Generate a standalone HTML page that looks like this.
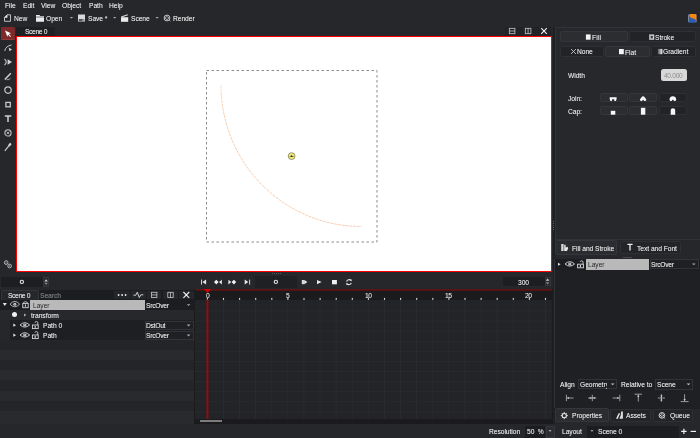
<!DOCTYPE html>
<html><head><meta charset="utf-8">
<style>
*{margin:0;padding:0;box-sizing:border-box}
html,body{width:700px;height:438px;overflow:hidden;background:#26272b;font-family:"Liberation Sans",sans-serif;font-size:6.6px;color:#ececec}
body{position:relative}
.a{position:absolute}
.t{position:absolute;white-space:nowrap;line-height:1;will-change:transform;margin-top:0.6px;text-shadow:0.25px 0 0 rgba(236,236,236,0.35)}
svg{position:absolute;overflow:visible}
.btn{position:absolute;background:#2c2d31;border:0.6px solid #35363b;border-radius:1.5px}
.btnd{position:absolute;background:#222327;border:0.6px solid #2f3035;border-radius:1.5px}
.cb{position:absolute;background:#1f2023;border:0.6px solid #333439}
</style></head><body>

<!-- ============ MENU ============ -->
<div class="t" style="left:5px;top:2.6px">File</div>
<div class="t" style="left:22.5px;top:2.6px">Edit</div>
<div class="t" style="left:41px;top:2.6px">View</div>
<div class="t" style="left:62px;top:2.6px">Object</div>
<div class="t" style="left:89px;top:2.6px">Path</div>
<div class="t" style="left:109px;top:2.6px">Help</div>

<!-- ============ TOOLBAR ============ -->
<svg style="left:0;top:0" width="700" height="26">
 <!-- new doc -->
 <path d="M7 14.8 H10.5 V21.3 H4.5 V17.3 Z" fill="none" stroke="#cfcfcf" stroke-width="0.9"/>
 <path d="M7.4 14.4 L4.1 17.7 H7.4 Z" fill="#ececec"/>
 <!-- folder -->
 <path d="M36 15 H39.5 L40.3 16 H44 V21.8 H36 Z" fill="#ececec"/>
 <path d="M36 17 H44" stroke="#26272b" stroke-width="0.6"/>
 <path d="M69.8 17 H73.2 L71.5 18.6 Z" fill="#b0b0b0"/>
 <!-- save -->
 <rect x="78" y="14.5" width="7" height="7" fill="#d8d8d8"/>
 <rect x="78.8" y="19" width="5.4" height="2" fill="#55565a"/>
 <rect x="82.5" y="19.6" width="1.3" height="1.2" fill="#e0e0e0"/>
 <path d="M113 17 H116.4 L114.7 18.6 Z" fill="#b0b0b0"/>
 <!-- scene clapper -->
 <path d="M121 17.2 H128.2 V21.8 H121 Z" fill="#ececec"/>
 <path d="M121 16.6 L127.6 14.2 L128 15.2 L121.4 17.4 Z" fill="#dcdcdc"/>
 <path d="M155.4 17 H158.8 L157.1 18.6 Z" fill="#b0b0b0"/>
 <!-- render -->
 <circle cx="167" cy="18" r="2.9" fill="none" stroke="#d8d8d8" stroke-width="0.9"/>
 <circle cx="167" cy="16.6" r="0.7" fill="#d8d8d8"/><circle cx="167" cy="19.4" r="0.7" fill="#d8d8d8"/>
 <circle cx="165.6" cy="18" r="0.7" fill="#d8d8d8"/><circle cx="168.4" cy="18" r="0.7" fill="#d8d8d8"/>
 <path d="M169.2 20.2 L170.4 21.2" stroke="#d8d8d8" stroke-width="0.7"/>
 <!-- logo -->
 <rect x="688" y="14" width="8.5" height="8.8" rx="1" fill="#2c5fb0"/>
 <path d="M689.6 14 H695.3 Q696.5 14 696.5 15.2 V20.8 Q695.6 19 692.5 18.2 Q690 17.6 689.6 16.4 Z" fill="#f7870f"/>
 <path d="M688.5 15 V21.5" stroke="#8c929a" stroke-width="0.8"/>
 <path d="M696.2 20.5 V22" stroke="#a0a6ae" stroke-width="0.6"/>
</svg>
<div class="t" style="left:14px;top:15.6px">New</div>
<div class="t" style="left:46px;top:15.6px">Open</div>
<div class="t" style="left:88px;top:15.6px">Save *</div>
<div class="t" style="left:131px;top:15.6px">Scene</div>
<div class="t" style="left:173px;top:15.6px">Render</div>

<!-- ============ CANVAS TAB BAR ============ -->
<div class="a" style="left:16px;top:26.5px;width:38.5px;height:9px;background:#1f2023"></div>
<div class="t" style="left:24.5px;top:28.6px;letter-spacing:-0.3px">Scene 0</div>
<div class="a" style="left:505px;top:26.5px;width:45.5px;height:9px;background:#222327"></div>
<svg style="left:0;top:0" width="700" height="40">
 <rect x="509.3" y="28.3" width="5.6" height="5.4" fill="none" stroke="#c8c8c8" stroke-width="0.8"/>
 <path d="M509.3 31 H514.9" stroke="#c8c8c8" stroke-width="0.8"/>
 <rect x="525.3" y="28.3" width="5.6" height="5.4" fill="none" stroke="#c8c8c8" stroke-width="0.8"/>
 <path d="M528.1 28.3 V33.7" stroke="#c8c8c8" stroke-width="0.8"/>
 <path d="M541.2 28.2 L546.8 33.8 M546.8 28.2 L541.2 33.8" stroke="#f0f0f0" stroke-width="1.15"/>
</svg>

<!-- ============ CANVAS ============ -->
<div class="a" style="left:16px;top:36px;width:536.4px;height:236px;background:#ff0000"></div>
<div class="a" style="left:17.1px;top:37.1px;width:534.2px;height:233.8px;background:#ffffff"></div>
<svg style="left:0;top:0" width="700" height="300">
 <rect x="206.5" y="70.5" width="170.5" height="171.5" fill="none" stroke="#8c8c8c" stroke-width="1" stroke-dasharray="2.6 2.4"/>
 <defs><linearGradient id="arcg" x1="0" y1="85" x2="0" y2="227" gradientUnits="userSpaceOnUse"><stop offset="0" stop-color="#f9dcc8"/><stop offset="0.2" stop-color="#f5c8a8"/><stop offset="1" stop-color="#f6c9aa"/></linearGradient></defs>
 <path d="M221 85 A140.5 141.5 0 0 0 361.5 226.5" fill="none" stroke="url(#arcg)" stroke-width="0.95" stroke-dasharray="3 0.8"/>
 <circle cx="291.6" cy="156.1" r="3.4" fill="#f2ee78" stroke="#4a4a3a" stroke-width="0.55"/>
 <path d="M289.6 156.4 H293.6" stroke="#303020" stroke-width="0.7"/><path d="M291.6 154.6 L292.3 156.4 L291.6 157.3 L290.9 156.4 Z" fill="#303020"/>
</svg>

<!-- ============ LEFT TOOLS ============ -->
<div class="a" style="left:1px;top:27px;width:14.2px;height:13.2px;background:#7e2a2b;border-radius:1.5px;border-bottom:0.7px solid #8f3b3b"></div>
<svg style="left:0;top:0" width="16" height="280">
 <path d="M5 30.4 L11 33.2 L8.9 34 L11 36.3 L10.2 37 L8.1 34.8 L7.3 36.8 Z" fill="#ffffff"/>
 <!-- node tool -->
 <path d="M4.8 51 Q5.5 46 11.5 45" fill="none" stroke="#c4c4c4" stroke-width="1"/>
 <path d="M8.6 47.4 L12 49.6 L9.6 51.2 Z" fill="#d4d4d4"/>
 <!-- path tool -->
 <path d="M4.5 59 Q8 62 4.5 65.2" fill="none" stroke="#c4c4c4" stroke-width="1.1"/>
 <path d="M7.6 59.2 L12 62 L7.6 64.8 Z" fill="#d4d4d4"/>
 <!-- pen -->
 <path d="M4.8 79.5 L10.8 73.2" stroke="#d0d0d0" stroke-width="1.5"/>
 <path d="M6.5 79.6 Q9.5 80.2 10.5 78.3" fill="none" stroke="#b8b8b8" stroke-width="0.8"/>
 <!-- circle -->
 <circle cx="8" cy="90.1" r="3.2" fill="none" stroke="#c8c8c8" stroke-width="1.2"/>
 <!-- rect -->
 <rect x="5.9" y="102.4" width="4.4" height="4.4" fill="none" stroke="#c8c8c8" stroke-width="1.3"/>
 <!-- T -->
 <path d="M4.8 116 H11.3 M8 116 V122" stroke="#d0d0d0" stroke-width="1.5"/>
 <!-- circle x -->
 <circle cx="8" cy="132.9" r="3.1" fill="none" stroke="#c4c4c4" stroke-width="1.1"/>
 <path d="M6.6 131.5 L9.4 134.3 M9.4 131.5 L6.6 134.3" stroke="#c4c4c4" stroke-width="0.9"/>
 <!-- eyedropper -->
 <path d="M4.8 150.8 L10.8 143.5" stroke="#c4c4c4" stroke-width="1.2"/>
 <path d="M8.8 145.8 L10.8 143.5" stroke="#d4d4d4" stroke-width="2"/>
 <!-- link icon -->
 <ellipse cx="6.2" cy="262.6" rx="1.8" ry="1.9" fill="none" stroke="#d8d8d8" stroke-width="0.8"/>
 <ellipse cx="9.6" cy="266" rx="1.8" ry="1.9" fill="none" stroke="#d8d8d8" stroke-width="0.8"/>
 <path d="M6.2 261.6 V263.6 M9.6 265 V267" stroke="#bbbbbb" stroke-width="0.6"/>
</svg>

<!-- ============ TRANSPORT ============ -->
<div class="a" style="left:1px;top:276.5px;width:42.2px;height:10.3px;background:#1d1e21;border-radius:1px"></div>
<div class="a" style="left:43.2px;top:276.5px;width:5.8px;height:10.3px;background:#26272b;border:0.6px solid #35363a"></div>

<div class="a" style="left:254.5px;top:276px;width:42.5px;height:11.6px;background:#1f2023"></div>

<div class="a" style="left:502.5px;top:276.6px;width:42.2px;height:9.8px;background:#1d1e21;border-radius:1px"></div>
<div class="a" style="left:544.7px;top:276.6px;width:5.9px;height:9.8px;background:#26272b;border:0.6px solid #35363a"></div>
<div class="t" style="left:518px;top:279px">300</div>
<div class="a" style="left:272px;top:273px;width:9px;height:1px;background:repeating-linear-gradient(90deg,#58595e 0 1px,transparent 1px 2px)"></div>
<svg style="left:0;top:0" width="700" height="300">
 <ellipse cx="21.85" cy="281.9" rx="1.65" ry="1.6" fill="none" stroke="#e6e6e6" stroke-width="1.1"/>
 <ellipse cx="275.85" cy="281.9" rx="1.65" ry="1.6" fill="none" stroke="#e6e6e6" stroke-width="1.1"/>
 <path d="M44.3 281.4 L46.1 279.2 L47.9 281.4 Z" fill="#d0d0d0"/><path d="M44.3 282.8 L46.1 285 L47.9 282.8 Z" fill="#8a8a8a"/>
 <path d="M545.8 280.8 L547.6 278.6 L549.4 280.8 Z" fill="#d0d0d0"/><path d="M545.8 282.2 L547.6 284.4 L549.4 282.2 Z" fill="#8a8a8a"/>
 <!-- |< -->
 <rect x="201" y="279.6" width="0.9" height="5" fill="#e6e6e6"/>
 <path d="M206.1 279.6 V284.6 L202.4 282.1 Z" fill="#e6e6e6"/>
 <!-- <> < -->
 <path d="M214 282.1 L216.3 279.7 L218.6 282.1 L216.3 284.5 Z" fill="#f0f0f0"/>
 <path d="M221.9 279.7 V284.5 L219 282.1 Z" fill="#e6e6e6"/>
 <!-- > <> -->
 <path d="M228.4 279.7 V284.5 L231.3 282.1 Z" fill="#e6e6e6"/>
 <path d="M231.6 282.1 L233.9 279.7 L236.2 282.1 L233.9 284.5 Z" fill="#f0f0f0"/>
 <!-- >| -->
 <path d="M244.7 279.6 V284.6 L248.3 282.1 Z" fill="#e6e6e6"/>
 <rect x="249.2" y="279.6" width="0.9" height="5" fill="#e6e6e6"/>
 <!-- play from -->
 <rect x="301.8" y="280" width="2.6" height="4.2" fill="#d8d8d8"/>
 <path d="M304.2 280 V284.2 L307.4 282.1 Z" fill="#e8e8e8"/>
 <!-- play -->
 <path d="M317 280 V284.3 L321.6 282.1 Z" fill="#e8e8e8"/>
 <!-- stop -->
 <rect x="332" y="280" width="4.9" height="4.3" fill="#f0f0f0"/>
 <!-- loop -->
 <path d="M346.6 281.6 A2.5 2.5 0 0 1 351 280.6" fill="none" stroke="#e0e0e0" stroke-width="1.1"/>
 <path d="M351.3 282.8 A2.5 2.5 0 0 1 346.9 283.6" fill="none" stroke="#e0e0e0" stroke-width="1.1"/>
 <path d="M350 279.3 L352 279.8 L351.2 281.6 Z M348 285 L346 284.4 L346.8 282.6 Z" fill="#e0e0e0"/>
</svg>

<!-- ============ LAYER PANEL ============ -->
<div class="a" style="left:0;top:290px;width:194px;height:134px;background:#26272b"></div>
<div class="a" style="left:0;top:290px;width:194px;height:10px;background:#1c1d20"></div>
<div class="a" style="left:1px;top:290px;width:37.5px;height:10px;background:#26272b;border:0.6px solid #34353a;border-bottom:none;border-radius:1.5px 1.5px 0 0"></div>
<div class="t" style="left:8px;top:292.2px;letter-spacing:-0.3px">Scene 0</div>
<div class="t" style="left:40px;top:292.2px;color:#6f7075">Search</div>
<div class="a" style="left:114.3px;top:290.7px;width:15.7px;height:8.6px;background:#25262a;border-radius:1px"></div>
<div class="a" style="left:131px;top:290.7px;width:14.7px;height:8.6px;background:#25262a;border-radius:1px"></div>
<div class="a" style="left:147px;top:290.7px;width:14.4px;height:8.6px;background:#25262a;border-radius:1px"></div>
<div class="a" style="left:163px;top:290.7px;width:14.9px;height:8.6px;background:#25262a;border-radius:1px"></div>
<div class="a" style="left:179px;top:290.7px;width:14.6px;height:8.6px;background:#25262a;border-radius:1px"></div>
<svg style="left:0;top:0" width="200" height="438">
 <circle cx="118.6" cy="295" r="0.9" fill="#eee"/><circle cx="122.1" cy="295" r="0.9" fill="#eee"/><circle cx="125.6" cy="295" r="0.9" fill="#eee"/>
 <path d="M133.5 295.2 H135.8 L137.3 292.2 L139.3 297.6 L140.8 294.8 H143.3" fill="none" stroke="#e0e0e0" stroke-width="0.9"/>
 <rect x="151.5" y="292.3" width="5.4" height="5.2" fill="none" stroke="#c8c8c8" stroke-width="0.8"/>
 <path d="M151.5 294.9 H156.9" stroke="#c8c8c8" stroke-width="0.8"/>
 <rect x="167.8" y="292.3" width="5.4" height="5.2" fill="none" stroke="#c8c8c8" stroke-width="0.8"/>
 <path d="M170.5 292.3 V297.5" stroke="#c8c8c8" stroke-width="0.8"/>
 <path d="M183.4 292 L189.2 297.8 M189.2 292 L183.4 297.8" stroke="#f0f0f0" stroke-width="1.1"/>
</svg>

<!-- rows -->
<div class="a" style="left:0;top:300px;width:194px;height:10px;background:#1c1d20"></div>
<div class="a" style="left:0;top:310px;width:194px;height:10px;background:#27282c"></div>
<div class="a" style="left:0;top:320px;width:10px;height:20px;background:#26272b"></div>
<div class="a" style="left:10px;top:320px;width:184px;height:20px;background:#1e1f22"></div>
<div class="a" style="left:0;top:339.6px;width:194px;height:10.2px;background:#242529"></div>
<div class="a" style="left:0;top:349.8px;width:194px;height:10.2px;background:#292a2e"></div>
<div class="a" style="left:0;top:360px;width:194px;height:10.2px;background:#242529"></div>
<div class="a" style="left:0;top:370.2px;width:194px;height:10.2px;background:#292a2e"></div>
<div class="a" style="left:0;top:380.4px;width:194px;height:10.2px;background:#242529"></div>
<div class="a" style="left:0;top:390.6px;width:194px;height:10.2px;background:#292a2e"></div>
<div class="a" style="left:0;top:400.8px;width:194px;height:10.2px;background:#242529"></div>
<div class="a" style="left:0;top:411px;width:194px;height:13.0px;background:#292a2e"></div>

<div class="a" style="left:30px;top:300.4px;width:114.6px;height:9.6px;background:#b9b9b9"></div>
<div class="t" style="left:32.5px;top:302.3px;color:#1e1e1e">Layer</div>
<div class="a" style="left:145.4px;top:300.5px;width:48.2px;height:9.5px;background:#1c1d20"></div>
<div class="t" style="left:146.4px;top:302.4px;letter-spacing:-0.22px">SrcOver</div>
<div class="t" style="left:31px;top:312.3px">transform</div>
<div class="t" style="left:43px;top:322.3px">Path 0</div>
<div class="cb" style="left:145.4px;top:321.2px;width:48.2px;height:8.6px"></div>
<div class="t" style="left:146.4px;top:322.6px;letter-spacing:-0.22px">DstOut</div>
<div class="t" style="left:43px;top:332.3px">Path</div>
<div class="cb" style="left:145.4px;top:331px;width:48.2px;height:8.6px"></div>
<div class="t" style="left:146.4px;top:332.6px;letter-spacing:-0.22px">SrcOver</div>
<svg style="left:0;top:0" width="200" height="438">
 <path d="M2.8 302.9 H6.8 L4.8 306.1 Z" fill="#e6e6e6"/>
 <path d="M10.0 304.2 Q14.8 298.59999999999997 19.6 304.2 Q14.8 309.4 10.0 304.2 Z" fill="none" stroke="#d4d4d4" stroke-width="0.8"/><circle cx="14.8" cy="304.2" r="1.5" fill="#cfcfcf"/><circle cx="14.8" cy="304.2" r="0.5" fill="#555"/>
 <rect x="22.8" y="303.4" width="5.4" height="4.3" fill="none" stroke="#d8d8d8" stroke-width="0.9"/><rect x="24.900000000000002" y="304.5" width="1.1" height="2.1" fill="#d8d8d8"/><path d="M23.7 303.4 V302.29999999999995 Q25.5 301.0 27.3 302.29999999999995 V303.4" fill="none" stroke="#d8d8d8" stroke-width="0.8"/>
 <path d="M186.8 304.2 H190.4 L188.6 306 Z" fill="#a8a8a8"/>
 <!-- transform -->
 <circle cx="14.5" cy="314.6" r="2.5" fill="#f4f4f4"/>
 <path d="M24.3 313.6 L26 315 L24.3 316.4 Z" fill="#e0e0e0"/>
 <!-- path 0 -->
 <path d="M13.3 323.6 L16 325.2 L13.3 326.8 Z" fill="#e6e6e6"/>
 <path d="M20.0 325.0 Q24.8 320.4 29.6 325.0 Q24.8 329.2 20.0 325.0 Z" fill="none" stroke="#dadada" stroke-width="0.9"/><ellipse cx="24.8" cy="325.0" rx="1.7" ry="1.5" fill="#c4c4c4"/><circle cx="24.8" cy="324.8" r="0.5" fill="#666"/>
 <rect x="32.4" y="325.0" width="5.8" height="3.6" fill="none" stroke="#dadada" stroke-width="0.9"/><rect x="34.6" y="325.9" width="1.2" height="1.9" fill="#dadada"/><path d="M37.8 325.0 V322.8 Q37.8 321.6 36.4 321.6 Q35.0 321.6 35.0 322.6" fill="none" stroke="#dadada" stroke-width="0.85"/>
 <path d="M186.8 324.6 H190.4 L188.6 326.4 Z" fill="#a8a8a8"/>
 <!-- path -->
 <path d="M13.3 333.6 L16 335.2 L13.3 336.8 Z" fill="#e6e6e6"/>
 <path d="M20.0 335.0 Q24.8 330.4 29.6 335.0 Q24.8 339.2 20.0 335.0 Z" fill="none" stroke="#dadada" stroke-width="0.9"/><ellipse cx="24.8" cy="335.0" rx="1.7" ry="1.5" fill="#c4c4c4"/><circle cx="24.8" cy="334.8" r="0.5" fill="#666"/>
 <rect x="32.4" y="335.0" width="5.8" height="3.6" fill="none" stroke="#dadada" stroke-width="0.9"/><rect x="34.6" y="335.9" width="1.2" height="1.9" fill="#dadada"/><path d="M37.8 335.0 V332.8 Q37.8 331.6 36.4 331.6 Q35.0 331.6 35.0 332.6" fill="none" stroke="#dadada" stroke-width="0.85"/>
 <path d="M186.8 334.6 H190.4 L188.6 336.4 Z" fill="#a8a8a8"/>
</svg>

<!-- ============ TIMELINE ============ -->
<div class="a" style="left:194px;top:289px;width:358.5px;height:135px;background:#1b1b1d"></div>
<div class="a" style="left:194.6px;top:300px;width:357.9px;height:119px;background:#232427"></div>
<div class="a" style="left:194.6px;top:289px;width:357.9px;height:2.4px;background:linear-gradient(180deg,#651515,#481111)"></div>
<svg style="left:0;top:0" width="560" height="438">
<rect x="206.90" y="300" width="0.8" height="119" fill="#2b2c30"/>
<rect x="206.85" y="297.9" width="1.1" height="2" fill="#d8d8d8"/>
<rect x="223.00" y="300" width="0.8" height="119" fill="#2b2c30"/>
<rect x="222.95" y="297.9" width="1.1" height="2" fill="#d8d8d8"/>
<rect x="239.10" y="300" width="0.8" height="119" fill="#2b2c30"/>
<rect x="239.05" y="297.9" width="1.1" height="2" fill="#d8d8d8"/>
<rect x="255.20" y="300" width="0.8" height="119" fill="#2b2c30"/>
<rect x="255.15" y="297.9" width="1.1" height="2" fill="#d8d8d8"/>
<rect x="271.30" y="300" width="0.8" height="119" fill="#2b2c30"/>
<rect x="271.25" y="297.9" width="1.1" height="2" fill="#d8d8d8"/>
<rect x="287.40" y="300" width="0.8" height="119" fill="#2b2c30"/>
<rect x="287.35" y="297.9" width="1.1" height="2" fill="#d8d8d8"/>
<rect x="303.50" y="300" width="0.8" height="119" fill="#2b2c30"/>
<rect x="303.45" y="297.9" width="1.1" height="2" fill="#d8d8d8"/>
<rect x="319.60" y="300" width="0.8" height="119" fill="#2b2c30"/>
<rect x="319.55" y="297.9" width="1.1" height="2" fill="#d8d8d8"/>
<rect x="335.70" y="300" width="0.8" height="119" fill="#2b2c30"/>
<rect x="335.65" y="297.9" width="1.1" height="2" fill="#d8d8d8"/>
<rect x="351.80" y="300" width="0.8" height="119" fill="#2b2c30"/>
<rect x="351.75" y="297.9" width="1.1" height="2" fill="#d8d8d8"/>
<rect x="367.90" y="300" width="0.8" height="119" fill="#2b2c30"/>
<rect x="367.85" y="297.9" width="1.1" height="2" fill="#d8d8d8"/>
<rect x="384.00" y="300" width="0.8" height="119" fill="#2b2c30"/>
<rect x="383.95" y="297.9" width="1.1" height="2" fill="#d8d8d8"/>
<rect x="400.10" y="300" width="0.8" height="119" fill="#2b2c30"/>
<rect x="400.05" y="297.9" width="1.1" height="2" fill="#d8d8d8"/>
<rect x="416.20" y="300" width="0.8" height="119" fill="#2b2c30"/>
<rect x="416.15" y="297.9" width="1.1" height="2" fill="#d8d8d8"/>
<rect x="432.30" y="300" width="0.8" height="119" fill="#2b2c30"/>
<rect x="432.25" y="297.9" width="1.1" height="2" fill="#d8d8d8"/>
<rect x="448.40" y="300" width="0.8" height="119" fill="#2b2c30"/>
<rect x="448.35" y="297.9" width="1.1" height="2" fill="#d8d8d8"/>
<rect x="464.50" y="300" width="0.8" height="119" fill="#2b2c30"/>
<rect x="464.45" y="297.9" width="1.1" height="2" fill="#d8d8d8"/>
<rect x="480.60" y="300" width="0.8" height="119" fill="#2b2c30"/>
<rect x="480.55" y="297.9" width="1.1" height="2" fill="#d8d8d8"/>
<rect x="496.70" y="300" width="0.8" height="119" fill="#2b2c30"/>
<rect x="496.65" y="297.9" width="1.1" height="2" fill="#d8d8d8"/>
<rect x="512.80" y="300" width="0.8" height="119" fill="#2b2c30"/>
<rect x="512.75" y="297.9" width="1.1" height="2" fill="#d8d8d8"/>
<rect x="528.90" y="300" width="0.8" height="119" fill="#2b2c30"/>
<rect x="528.85" y="297.9" width="1.1" height="2" fill="#d8d8d8"/>
<rect x="545.00" y="300" width="0.8" height="119" fill="#2b2c30"/>
<rect x="544.95" y="297.9" width="1.1" height="2" fill="#d8d8d8"/>
<rect x="194.6" y="310.5" width="358" height="0.8" fill="#2a2b2f"/>
<rect x="194.6" y="320.6" width="358" height="0.8" fill="#2a2b2f"/>
<rect x="194.6" y="330.7" width="358" height="0.8" fill="#2a2b2f"/>
<rect x="194.6" y="340.8" width="358" height="0.8" fill="#2a2b2f"/>
<rect x="194.6" y="350.9" width="358" height="0.8" fill="#2a2b2f"/>
<rect x="194.6" y="361.0" width="358" height="0.8" fill="#2a2b2f"/>
<rect x="194.6" y="371.1" width="358" height="0.8" fill="#2a2b2f"/>
<rect x="194.6" y="381.2" width="358" height="0.8" fill="#2a2b2f"/>
<rect x="194.6" y="391.3" width="358" height="0.8" fill="#2a2b2f"/>
<rect x="194.6" y="401.4" width="358" height="0.8" fill="#2a2b2f"/>
<rect x="194.6" y="411.5" width="358" height="0.8" fill="#2a2b2f"/>
<path d="M203.8 289 H211 L207.4 292.9 Z" fill="#d40000"/>
<rect x="206.6" y="299.5" width="1.7" height="119.3" fill="#b80000"/>
</svg>
<div class="t" style="left:205.6px;top:292.2px;color:#e4e4e4">0</div>
<div class="t" style="left:285.8px;top:292.2px;color:#e4e4e4">5</div>
<div class="t" style="left:364.6px;top:292.2px;color:#e4e4e4;letter-spacing:-0.3px">10</div>
<div class="t" style="left:444.8px;top:292.2px;color:#e4e4e4;letter-spacing:-0.3px">15</div>
<div class="t" style="left:525.2px;top:292.2px;color:#e4e4e4;letter-spacing:-0.3px">20</div>
<div class="a" style="left:199.7px;top:420px;width:22.3px;height:2px;background:#7c7c7c"></div>

<!-- ============ RIGHT PANEL ============ -->
<div class="a" style="left:552.5px;top:26.5px;width:2.2px;height:397.5px;background:#1f2023"></div>
<div class="a" style="left:553.3px;top:221px;width:0.7px;height:9px;background:repeating-linear-gradient(180deg,#5a5b60 0 1px,transparent 1px 2px)"></div>
<div class="a" style="left:554.7px;top:26.5px;width:146px;height:213.8px;background:#27282c;border:0.8px solid #323338;border-right:none"></div>

<div class="btn" style="left:560px;top:31px;width:67.5px;height:11.4px"></div>
<div class="btnd" style="left:629px;top:31.3px;width:67px;height:11px"></div>
<div class="btnd" style="left:560px;top:46.2px;width:44px;height:10.6px"></div>
<div class="btn" style="left:605px;top:46.2px;width:45.3px;height:10.6px"></div>
<div class="btnd" style="left:651.4px;top:46.2px;width:44.6px;height:10.6px"></div>
<svg style="left:0;top:0" width="700" height="130">
 <rect x="585.9" y="34.4" width="4.7" height="5.3" fill="#f4f4f4"/>
 <rect x="649.2" y="34.4" width="5" height="5.4" fill="#d0d0d0"/>
 <rect x="650.6" y="35.8" width="2.2" height="2.6" fill="#3a3b40"/>
 <path d="M571 49 L576 54 M576 49 L571 54" stroke="#d8d8d8" stroke-width="0.8"/>
 <rect x="619" y="49" width="4.8" height="5.2" fill="#f4f4f4"/>
 <defs><linearGradient id="gr" x1="0" x2="1"><stop offset="0" stop-color="#555"/><stop offset="1" stop-color="#eee"/></linearGradient></defs>
 <rect x="657.8" y="48.9" width="4.6" height="5.3" fill="url(#gr)"/>
</svg>
<div class="t" style="left:592.2px;top:34.4px;letter-spacing:0.2px">Fill</div>
<div class="t" style="left:654.6px;top:34.2px">Stroke</div>
<div class="t" style="left:576.5px;top:48.8px">None</div>
<div class="t" style="left:625.2px;top:49px">Flat</div>
<div class="t" style="left:662.8px;top:48.8px">Gradient</div>

<div class="t" style="left:567.8px;top:72.6px">Width</div>
<div class="a" style="left:660.6px;top:69.4px;width:26.8px;height:11.5px;background:#d8d8d8;border-radius:2.5px"></div>
<div class="t" style="left:664.2px;top:72.8px;color:#8a8a8a;letter-spacing:-0.3px">40.000</div>

<div class="t" style="left:567.8px;top:95.8px">Join:</div>
<div class="t" style="left:567.8px;top:108.2px">Cap:</div>
<div class="btn" style="left:599.7px;top:93.4px;width:27.9px;height:8.9px"></div>
<div class="btn" style="left:628.6px;top:93.4px;width:28.8px;height:8.9px"></div>
<div class="btnd" style="left:658.8px;top:93.4px;width:28.2px;height:8.9px"></div>
<div class="btn" style="left:599.7px;top:106.4px;width:27.9px;height:9.1px"></div>
<div class="btn" style="left:628.6px;top:106.4px;width:28.8px;height:9.1px"></div>
<div class="btnd" style="left:658.8px;top:106.4px;width:28.2px;height:9.1px"></div>
<svg style="left:0;top:0" width="700" height="130">
 <path d="M609.7 97.2 H616.6 V98.9 L615.9 100.9 H614.4 L614.2 99.2 H612.1 L611.9 100.9 H610.4 L609.7 98.9 Z" fill="#f6f6f6"/>
 <path d="M639.8 99.6 L642.2 96.6 Q643.1 95.9 644 96.6 L646.4 99.6 L645.6 100.9 H644.2 L643.1 99.4 L642 100.9 H640.6 Z" fill="#f6f6f6"/>
 <path d="M669.4 99.6 Q669.8 96.2 672.85 96.2 Q675.9 96.2 676.3 99.6 L675.5 100.9 H674.1 L672.85 99.6 L671.6 100.9 H670.2 Z" fill="#f6f6f6"/>
 <rect x="610.8" y="110.8" width="4.5" height="3.9" fill="#f6f6f6"/>
 <rect x="640.9" y="107.8" width="4.4" height="6.9" fill="#f6f6f6"/>
 <path d="M670.7 114.7 V109.9 Q670.7 108.3 672.95 108.3 Q675.2 108.3 675.2 109.9 V114.7 Z" fill="#f6f6f6"/>
</svg>

<!-- tabs -->
<div class="btn" style="left:554.7px;top:240.3px;width:62.7px;height:14.8px;background:#2b2c30"></div>
<div class="btnd" style="left:619.6px;top:240.8px;width:61.7px;height:13.5px;background:#232428"></div>
<div class="t" style="left:571.8px;top:245.5px">Fill and Stroke</div>
<div class="t" style="left:637px;top:245.2px">Text and Font</div>
<svg style="left:0;top:0" width="700" height="438">
 <rect x="561.2" y="244" width="2.4" height="7" fill="#d8d8d8"/>
 <path d="M564.2 244.8 H565.6 V247.6 L567.5 246.8 L568.2 248.2 L567 251 H564.2 Z" fill="#e8e8e8"/>
 <path d="M627.4 244.3 H632.6 M630 244.3 V250.6" stroke="#ececec" stroke-width="1.3"/>
 <rect x="622.9" y="257" width="9" height="0.7" fill="#5a5b60"/>
 <rect x="349.5" y="257" width="0" height="0" fill="none"/>
</svg>
<div class="a" style="left:554.2px;top:258.6px;width:146px;height:149.4px;background:#1f2023;border-left:0.8px solid #303136"></div>
<div class="a" style="left:555px;top:258.8px;width:146px;height:11px;background:#1c1d20"></div>
<div class="a" style="left:586px;top:259px;width:63.2px;height:10.6px;background:#b9b9b9"></div>
<div class="t" style="left:588px;top:261.6px;color:#1e1e1e">Layer</div>
<div class="cb" style="left:649.8px;top:259.2px;width:49px;height:10px"></div>
<div class="t" style="left:651px;top:261.8px;letter-spacing:-0.22px">SrcOver</div>
<svg style="left:0;top:0" width="700" height="438">
 <path d="M558 262.8 L560.6 264.3 L558 265.8 Z" fill="#e0e0e0"/>
 <path d="M565.0 264.0 Q569.8 259.4 574.6 264.0 Q569.8 268.2 565.0 264.0 Z" fill="none" stroke="#dadada" stroke-width="0.9"/><ellipse cx="569.8" cy="264.0" rx="1.7" ry="1.5" fill="#c4c4c4"/><circle cx="569.8" cy="263.8" r="0.5" fill="#666"/>
 <rect x="577.6" y="264.2" width="5.8" height="3.6" fill="none" stroke="#dadada" stroke-width="0.9"/><rect x="579.8" y="265.1" width="1.2" height="1.9" fill="#dadada"/><path d="M583.0 264.2 V262.0 Q583.0 260.8 581.6 260.8 Q580.2 260.8 580.2 261.8" fill="none" stroke="#dadada" stroke-width="0.85"/>
 <path d="M692 263.4 H695.6 L693.8 265.2 Z" fill="#a8a8a8"/>
</svg>

<!-- align -->
<div class="t" style="left:559.6px;top:381.8px">Align</div>
<div class="cb" style="left:578px;top:379.3px;width:39px;height:10.2px;background:#1f2023"></div>
<div class="t" style="left:580px;top:381.8px;width:27px;overflow:hidden">Geometry</div>
<div class="t" style="left:621px;top:381.8px">Relative to</div>
<div class="cb" style="left:654.9px;top:379px;width:38.1px;height:10.9px;background:#1f2023"></div>
<div class="t" style="left:657px;top:381.8px">Scene</div>
<svg style="left:0;top:0" width="700" height="438">
 <path d="M610.8 383.4 H614.6 L612.7 385.3 Z" fill="#c0c0c0"/>
 <path d="M686.6 383.4 H690.4 L688.5 385.3 Z" fill="#c0c0c0"/>
 <g stroke="#d0d0d0" stroke-width="0.7" fill="#d8d8d8">
  <path d="M566.4 394.8 V401.2 M566.8 398 H573.6" fill="none"/>
  <path d="M567 398 L569 396.9 V399.1 Z" stroke="none"/>
  <path d="M592.3 394.8 V401.2 M588.2 398 H596.4" fill="none"/>
  <path d="M591.8 398 L589.8 396.9 V399.1 Z M592.8 398 L594.8 396.9 V399.1 Z" stroke="none"/>
  <path d="M619.8 394.8 V401.2 M612.6 398 H619.4" fill="none"/>
  <path d="M619.2 398 L617.2 396.9 V399.1 Z" stroke="none"/>
  <path d="M634.6 394.2 H642 M638.3 394.6 V401.6" fill="none"/>
  <path d="M638.3 394.8 L637.2 396.8 H639.4 Z" stroke="none"/>
  <path d="M657.8 398 H665 M661.4 394.2 V401.8" fill="none"/>
  <path d="M661.4 397.6 L660.3 395.6 H662.5 Z M661.4 398.4 L660.3 400.4 H662.5 Z" stroke="none"/>
  <path d="M680.6 401.6 H688.6 M684.6 394.2 V401.2" fill="none"/>
  <path d="M684.6 401 L683.5 399 H685.7 Z" stroke="none"/>
 </g>
</svg>
<div class="a" style="left:554.7px;top:407.8px;width:146px;height:0.7px;background:#1e1f22"></div>

<!-- bottom tabs -->
<div class="btn" style="left:555px;top:408px;width:53.8px;height:14px;background:#2b2c30"></div>
<div class="btnd" style="left:610px;top:408.8px;width:41.2px;height:12.8px;background:#232428"></div>
<div class="btnd" style="left:652.9px;top:408.8px;width:40.6px;height:12.8px;background:#232428"></div>
<div class="t" style="left:572px;top:412.7px">Properties</div>
<div class="t" style="left:626.4px;top:412.6px">Assets</div>
<div class="t" style="left:669.5px;top:412.6px">Queue</div>
<svg style="left:0;top:0" width="700" height="438">
 <circle cx="564.3" cy="415.6" r="2.1" fill="none" stroke="#e4e4e4" stroke-width="1.1"/>
 <g stroke="#e4e4e4" stroke-width="1">
  <path d="M564.3 412.1 V413.2 M564.3 418 V419.1 M560.8 415.6 H561.9 M566.7 415.6 H567.8 M561.8 413.1 L562.6 413.9 M566 417.3 L566.8 418.1 M566.8 413.1 L566 413.9 M562.6 417.3 L561.8 418.1"/>
 </g>
 <path d="M616 418.7 L618.8 413 L620 413.6 L617.8 418.7 Z" fill="#e8e8e8"/>
 <path d="M619.4 418.7 L620.8 415 L621 411.6 H622.9 V418.7 Z" fill="#dcdcdc"/>
 <circle cx="661.9" cy="415.4" r="2.8" fill="none" stroke="#e0e0e0" stroke-width="0.95"/>
 <circle cx="661.9" cy="414" r="0.75" fill="#e0e0e0"/><circle cx="661.9" cy="416.8" r="0.75" fill="#e0e0e0"/>
 <circle cx="660.5" cy="415.4" r="0.75" fill="#e0e0e0"/><circle cx="663.3" cy="415.4" r="0.75" fill="#e0e0e0"/>
 <path d="M664 417.6 L665.2 418.6" stroke="#d0d0d0" stroke-width="0.7"/>
</svg>

<!-- ============ STATUS BAR ============ -->
<div class="t" style="left:488.5px;top:428.6px">Resolution</div>
<div class="a" style="left:524.9px;top:426px;width:20.6px;height:12px;background:#1c1d20"></div>
<div class="t" style="left:526.6px;top:428.6px;word-spacing:1.2px;letter-spacing:0.15px">50 %</div>
<div class="a" style="left:545.5px;top:426px;width:9.1px;height:12px;background:#2b2c30;border:0.6px solid #36373c"></div>
<div class="t" style="left:561.8px;top:428.6px">Layout</div>
<div class="a" style="left:586.9px;top:425.6px;width:92.1px;height:12.4px;background:#1c1d20"></div>
<div class="t" style="left:597.5px;top:428.6px">Scene 0</div>
<svg style="left:0;top:0" width="700" height="438">
 <path d="M548.5 430.2 H551.6 L550.05 431.8 Z" fill="#c0c0c0"/>
 <path d="M590.4 430.2 H593.5 L591.95 431.8 Z" fill="#c0c0c0"/>
 <path d="M681.2 431.4 H686.6 M683.9 428.7 V434.1" stroke="#f0f0f0" stroke-width="1.2"/>
 <path d="M690.6 431.4 H696" stroke="#f0f0f0" stroke-width="1.2"/>
</svg>

</body></html>
